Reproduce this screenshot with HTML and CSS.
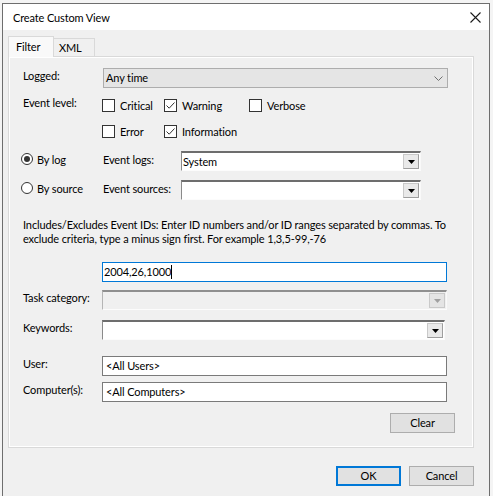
FILE: index.html
```
<!DOCTYPE html>
<html>
<head>
<meta charset="utf-8">
<link rel="stylesheet" href="styles.css">
</head>
<body>
<div class="screen">
  <div class="dialog">
    <div class="titlebar">
      <span class="title">Create Custom View</span>
      <svg class="close" width="11" height="11" viewBox="0 0 11 11"><path d="M0.5 0.5 L10.5 10.5 M10.5 0.5 L0.5 10.5" stroke="#1a1a1a" stroke-width="1.1" fill="none"/></svg>
    </div>
    <div class="body">
      <div class="tabs">
        <div class="tab active">Filter</div>
        <div class="tab">XML</div>
      </div>
      <div class="panel">
        <div class="row r-logged">
          <div class="lbl">Logged:</div>
          <div class="combo flat w-full">
            <span class="val">Any time</span>
            <svg class="chev" width="9" height="5" viewBox="0 0 9 5"><path d="M0.5 0.5 L4.5 4.5 L8.5 0.5" stroke="#707070" fill="none"/></svg>
          </div>
        </div>
        <div class="row r-check1">
          <div class="lbl up">Event level:</div>
          <div class="checks">
            <label class="chk c1"><span class="box"></span>Critical</label>
            <label class="chk c2"><span class="box on"><svg width="11" height="11" viewBox="0 0 11 11"><path d="M1.5 5.5 L4.2 8.2 L9.5 2.5" stroke="#333" stroke-width="1" fill="none"/></svg></span>Warning</label>
            <label class="chk c3"><span class="box"></span>Verbose</label>
          </div>
        </div>
        <div class="row r-check2">
          <div class="lbl"></div>
          <div class="checks">
            <label class="chk c1"><span class="box"></span>Error</label>
            <label class="chk c2"><span class="box on"><svg width="11" height="11" viewBox="0 0 11 11"><path d="M1.5 5.5 L4.2 8.2 L9.5 2.5" stroke="#333" stroke-width="1" fill="none"/></svg></span>Information</label>
          </div>
        </div>
        <div class="row r-bylog">
          <label class="radio"><span class="dot on"></span>By log</label>
          <div class="lbl2">Event logs:</div>
          <div class="combo sunk w-log">
            <span class="val">System</span>
            <span class="drop"><svg width="7" height="4" viewBox="0 0 7 4"><path d="M0 0 H7 L3.5 4 Z" fill="#000"/></svg></span>
          </div>
        </div>
        <div class="row r-bysrc">
          <label class="radio"><span class="dot"></span>By source</label>
          <div class="lbl2">Event sources:</div>
          <div class="combo sunk w-log">
            <span class="val"></span>
            <span class="drop"><svg width="7" height="4" viewBox="0 0 7 4"><path d="M0 0 H7 L3.5 4 Z" fill="#000"/></svg></span>
          </div>
        </div>
        <p class="desc">Includes/Excludes Event IDs: Enter ID numbers and/or ID ranges separated by commas. To<br>exclude criteria, type a minus sign first. For example 1,3,5-99,-76</p>
        <div class="row r-ids">
          <div class="lbl"></div>
          <div class="input focus w-full"><span class="val">2004,26,1000</span><span class="caret"></span></div>
        </div>
        <div class="row r-task">
          <div class="lbl">Task category:</div>
          <div class="combo sunk disabled w-full">
            <span class="val"></span>
            <span class="drop"><svg width="7" height="4" viewBox="0 0 7 4"><path d="M0 0 H7 L3.5 4 Z" fill="#a0a0a0"/></svg></span>
          </div>
        </div>
        <div class="row r-kw">
          <div class="lbl">Keywords:</div>
          <div class="combo sunk w-kw">
            <span class="val"></span>
            <span class="drop"><svg width="7" height="4" viewBox="0 0 7 4"><path d="M0 0 H7 L3.5 4 Z" fill="#000"/></svg></span>
          </div>
        </div>
        <div class="row r-user">
          <div class="lbl">User:</div>
          <div class="input w-full"><span class="val">&lt;All Users&gt;</span></div>
        </div>
        <div class="row r-comp">
          <div class="lbl">Computer(s):</div>
          <div class="input w-full"><span class="val">&lt;All Computers&gt;</span></div>
        </div>
        <div class="row r-clear">
          <button class="btn">Clear</button>
        </div>
      </div>
      <div class="footer">
        <button class="btn default">OK</button>
        <button class="btn">Cancel</button>
      </div>
    </div>
  </div>
</div>
</body>
</html>
```
FILE: styles.css
```
* { box-sizing: border-box; }
html, body { margin: 0; padding: 0; }
body {
  width: 493px;
  height: 496px;
  overflow: hidden;
  background: #f4f4f4;
  font-family: "Segoe UI", Lato, "Noto Sans", sans-serif;
  font-size: 11px;
  letter-spacing: -0.13px;
  color: #000;
}
.screen {
  padding: 3px 3px 0 2px;
  height: 496px;
}
.dialog {
  width: 488px;
  height: 500px;
  border: 1px solid #6e6e6e;
  border-bottom: none;
  background: #f0f0f0;
  display: flex;
  flex-direction: column;
}
.titlebar {
  height: 26px;
  background: #fff;
  display: flex;
  align-items: center;
  justify-content: space-between;
  padding: 0 8px 0 10px;
  flex: none;
}
.title { color: #000; margin-top: 1px; }
.body {
  padding: 6px 15px 0 5px;
  display: flex;
  flex-direction: column;
}
.tabs {
  display: flex;
  align-items: flex-end;
  height: 20px;
}
.tab {
  height: 18px;
  padding: 0 0 0 5px;
  width: 41px;
  border: 1px solid #d9d9d9;
  border-bottom: none;
  border-left: none;
  background: #f0f0f0;
  line-height: 17px;
}
.tab.active {
  height: 21px;
  width: 46px;
  padding-left: 7px;
  background: #f9f9f9;
  border-left: 1px solid #d9d9d9;
  border-right: 1px solid #d9d9d9;
  margin-bottom: -1px;
  position: relative;
  z-index: 1;
  line-height: 19px;
}
.panel {
  height: 392px;
  border: 1px solid #d9d9d9;
  box-shadow: inset 1px 1px 0 #fff, inset -1px -1px 0 #fff;
  padding: 0 0 0 14px;
  display: flex;
  flex-direction: column;
}
.row {
  display: flex;
  align-items: flex-start;
  height: 20px;
  flex: none;
}
.lbl {
  width: 79px;
  flex: none;
  line-height: 16px;
  white-space: nowrap;
}
.lbl.up { margin-top: -2px; }
.lbl2 {
  width: 78px;
  flex: none;
  line-height: 16px;
  margin-top: 1px;
  white-space: nowrap;
}
.r-logged { margin-top: 11px; }
.r-logged .lbl { width: 80px; }
.r-check1 { margin-top: 9px; height: 17px; }
.r-check2 { margin-top: 9px; height: 17px; }
.r-bylog { margin-top: 11px; }
.r-bysrc { margin-top: 9px; }
.desc {
  margin: 18px 0 0 0;
  line-height: 14px;
  height: 28px;
  white-space: nowrap;
  flex: none;
}
.r-ids { margin-top: 16px; }
.r-task { margin-top: 8px; }
.r-kw { margin-top: 10px; }
.r-user { margin-top: 16px; }
.r-comp { margin-top: 6px; }
.r-clear { margin-top: 11px; justify-content: flex-end; padding-right: 18px; }

.combo, .input {
  height: 20px;
  display: flex;
  align-items: center;
  flex: none;
}
.val { padding-left: 3px; line-height: 16px; }
.w-full { width: 345px; }
.w-log { width: 240px; }
.w-kw { width: 343px; }
.combo.flat {
  background: #e5e5e5;
  border: 1px solid #adadad;
  justify-content: space-between;
  padding-right: 4px;
}
.combo.flat .val { padding-left: 2px; }
.combo.sunk {
  background: #fff;
  border-top: 2px solid #6d6d6d;
  border-left: 1px solid #8a8a8a;
  border-right: 1px solid #f9f9f9;
  border-bottom: 1px solid #fcfcfc;
  justify-content: space-between;
  padding-right: 1px;
}
.combo.sunk .val { padding-left: 1px; }
.combo.disabled { background: #f0f0f0; border-top-color: #8f8f8f; border-left-color: #b5b5b5; }
.drop {
  width: 16px;
  height: 15px;
  background: #e9e9e9;
  border: 1px solid #c9c9c9;
  border-right-color: #9e9e9e;
  border-bottom-color: #9e9e9e;
  display: flex;
  align-items: center;
  justify-content: center;
  padding-top: 1px;
}
.combo.disabled .drop { background: #e4e4e4; border-color: #c9c9c9; }
.input {
  background: #fff;
  border: 1px solid #7a7a7a;
}
.input.focus { border: 1px solid #0078d7; }
.input.focus .val { padding-left: 1px; }
.caret { width: 1px; height: 14px; background: #000; }

.checks { display: flex; height: 17px; }
.chk {
  display: flex;
  align-items: center;
  height: 17px;
  flex: none;
}
.c1 { width: 62px; }
.c2 { width: 85px; }
.box {
  width: 13px;
  height: 13px;
  border: 1px solid #333;
  background: #fff;
  margin-right: 5px;
  display: flex;
  align-items: center;
  justify-content: center;
}

.radio {
  width: 82px;
  margin-left: -2px;
  display: flex;
  align-items: center;
  height: 16px;
  flex: none;
}
.dot {
  width: 12px;
  height: 12px;
  border: 1px solid #333;
  border-radius: 50%;
  background: #fff;
  margin-right: 4px;
  display: flex;
  align-items: center;
  justify-content: center;
}
.dot.on::after {
  content: "";
  width: 6px;
  height: 6px;
  border-radius: 50%;
  background: #333;
}

.btn {
  font-family: inherit;
  font-size: 11px;
  letter-spacing: -0.13px;
  color: #000;
  width: 65px;
  height: 20px;
  background: #e1e1e1;
  border: 1px solid #adadad;
  padding: 0;
  line-height: 16px;
}
.btn.default { border: 2px solid #0078d7; }
.footer {
  display: flex;
  justify-content: flex-end;
  gap: 8px;
  margin-top: 18px;
}
```
